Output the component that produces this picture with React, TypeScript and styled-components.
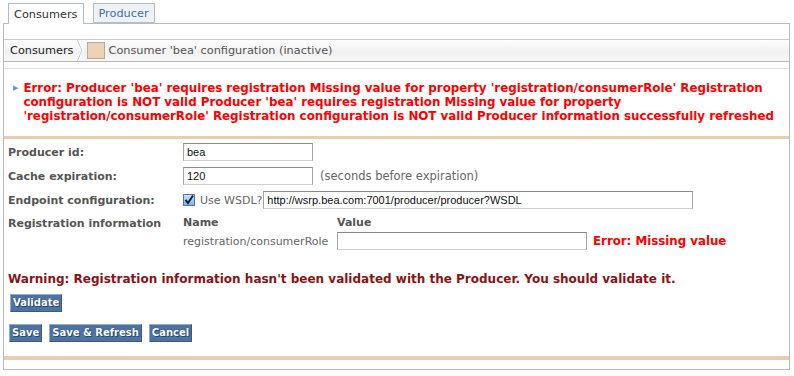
import styled, { createGlobalStyle } from 'styled-components';

const GlobalStyle = createGlobalStyle`
  body {
    margin: 0;
    background: #ffffff;
    font-family: "DejaVu Sans", Verdana, sans-serif;
    color: #333333;
  }
`;

const Page = styled.div`
  padding: 3px 4px 0 3px;
  width: 787px;
`;

const TabBar = styled.div`
  display: flex;
  gap: 9px;
  padding-left: 5px;
  height: 20px;
  position: relative;
  z-index: 1;
`;

const Tab = styled.div<{ $active?: boolean }>`
  display: flex;
  align-items: center;
  padding: 0 5px;
  height: ${(p) => (p.$active ? '20px' : '18px')};
  font-size: 11.3px;
  color: ${(p) => (p.$active ? '#333333' : '#3b6fb6')};
  background: ${(p) => (p.$active ? '#ffffff' : '#eef2f5')};
  border: 1px solid #b5bdc4;
  border-bottom: ${(p) => (p.$active ? 'none' : '1px solid #b5bdc4')};
`;

const Panel = styled.div`
  border: 1px solid #b5bdc4;
  height: 345px;
  display: flex;
  flex-direction: column;
`;

const Breadcrumb = styled.div`
  margin-top: 15px;
  height: 21px;
  display: flex;
  align-items: center;
  border-top: 1px solid #c9c9c9;
  border-bottom: 1px solid #b8b8b8;
  background: linear-gradient(#ffffff 0%, #f1f1f1 55%, #f7f7f7 100%);
  font-size: 11.3px;
  color: #444444;
`;

const Crumb = styled.span<{ $root?: boolean }>`
  padding-left: ${(p) => (p.$root ? '6px' : '4px')};
  color: ${(p) => (p.$root ? '#222222' : '#555555')};
  white-space: nowrap;
`;

const Swatch = styled.span`
  width: 16px;
  height: 15px;
  margin-left: 3px;
  background: #ecd2b8;
  border: 1px solid #bfa892;
`;

const MessageBox = styled.div`
  margin-top: 6px;
  border-top: 1px solid #e2e2e2;
  padding: 12px 3px 13px 9px;
  display: flex;
  gap: 5px;
`;

const ErrorText = styled.div`
  font-size: 11.85px;
  line-height: 14px;
  font-weight: bold;
  color: #ff0000;
`;

const Bullet = styled.span`
  color: #6f93c2;
  font-size: 7px;
  line-height: 14px;
`;

const Separator = styled.div`
  height: 3px;
  background: #e8cdb2;
`;

const Form = styled.div`
  padding: 4px 4px 0 4px;
  display: grid;
  grid-template-columns: 175px 1fr;
  row-gap: 6px;
  align-items: center;
`;

const Label = styled.div<{ $top?: boolean }>`
  font-size: 11px;
  font-weight: bold;
  color: #555555;
  align-self: ${(p) => (p.$top ? 'start' : 'center')};
  line-height: 15px;
  padding-top: ${(p) => (p.$top ? '1px' : '0')};
`;

const Field = styled.div`
  display: flex;
  align-items: center;
  gap: 6px;
  font-size: 11px;
  color: #666666;
`;

const TextBox = styled.div<{ $width: number }>`
  width: ${(p) => p.$width}px;
  height: 16px;
  box-sizing: content-box;
  border: 1px solid #a4a4a4;
  border-top-color: #8a8a8a;
  border-bottom-color: #cfcfcf;
  background: #ffffff;
  font-family: "Liberation Sans", Arial, sans-serif;
  font-size: 11px;
  line-height: 16px;
  padding-left: 3px;
  color: #111111;
  white-space: nowrap;
  overflow: hidden;
`;

const Hint = styled.span`
  margin-left: 1px;
  color: #666666;
  font-size: 11.5px;
`;

const WsdlLabel = styled.span`
  color: #666666;
  margin-left: -1px;
  margin-right: -5px;
`;

const RegTable = styled.div`
  display: grid;
  grid-template-columns: 154px auto auto;
  justify-content: start;
  align-items: center;
  row-gap: 2px;
  font-size: 11px;
  color: #666666;
`;

const ColHead = styled.div`
  font-weight: bold;
  color: #555555;
  line-height: 15px;
`;

const FieldError = styled.span`
  font-weight: bold;
  font-size: 11.8px;
  color: #ff0000;
  margin-left: 6px;
`;

const Warning = styled.div`
  margin: 22px 0 0 4px;
  font-size: 12px;
  font-weight: bold;
  color: #8b1313;
  line-height: 15px;
`;

const ButtonRow = styled.div<{ $top: number; $left: number }>`
  display: flex;
  gap: 7px;
  margin-top: ${(p) => p.$top}px;
  padding-left: ${(p) => p.$left}px;
`;

const Button = styled.button`
  font-family: "DejaVu Sans", Verdana, sans-serif;
  font-size: 10px;
  font-weight: bold;
  color: #ffffff;
  text-shadow: 0 0 1px #1c3458, 1px 1px 0 #2b4a74;
  background: #4d73a5;
  border: 1px solid #97abc6;
  border-bottom-color: #3a5a86;
  border-right-color: #3a5a86;
  height: 18px;
  padding: 0 2px;
  line-height: 14px;
  cursor: pointer;
`;

const Footer = styled.div`
  margin-top: auto;
  margin-bottom: 9px;
  height: 4px;
  background: #e8cdb2;
`;

const Chevron = () => (
  <svg width="7" height="21" viewBox="0 0 7 21" style={{ marginLeft: 3 }}>
    <polyline points="0.5,0 5,10.5 0.5,21" fill="none" stroke="#c8c8c8" strokeWidth="1" />
    <polyline points="1.5,0 6,10.5 1.5,21" fill="none" stroke="#ffffff" strokeWidth="1" />
  </svg>
);

const CheckBox = () => (
  <svg width="12" height="12" viewBox="0 0 12 12">
    <defs>
      <linearGradient id="cb" x1="0" y1="0" x2="0" y2="1">
        <stop offset="0" stopColor="#d6e6f8" />
        <stop offset="1" stopColor="#7fb0e6" />
      </linearGradient>
    </defs>
    <rect x="0.5" y="0.5" width="11" height="11" fill="url(#cb)" stroke="#5478a8" />
    <path d="M2.5 6 L5 9 L10 1.5" fill="none" stroke="#13264a" strokeWidth="2" />
  </svg>
);

const App = () => {
  return (
    <Page>
      <GlobalStyle />
      <TabBar>
        <Tab $active>Consumers</Tab>
        <Tab>Producer</Tab>
      </TabBar>
      <Panel>
        <Breadcrumb>
          <Crumb $root>Consumers</Crumb>
          <Chevron />
          <Swatch />
          <Crumb>Consumer 'bea' configuration (inactive)</Crumb>
        </Breadcrumb>
        <MessageBox>
          <Bullet>▶</Bullet>
          <ErrorText>
            Error: Producer 'bea' requires registration Missing value for property 'registration/consumerRole' Registration
            configuration is NOT valid Producer 'bea' requires registration Missing value for property
            'registration/consumerRole' Registration configuration is NOT valid Producer information successfully refreshed
          </ErrorText>
        </MessageBox>
        <Separator />
        <Form>
          <Label>Producer id:</Label>
          <Field>
            <TextBox $width={125}>bea</TextBox>
          </Field>
          <Label>Cache expiration:</Label>
          <Field>
            <TextBox $width={125}>120</TextBox>
            <Hint>(seconds before expiration)</Hint>
          </Field>
          <Label>Endpoint configuration:</Label>
          <Field>
            <CheckBox />
            <WsdlLabel>Use WSDL?</WsdlLabel>
            <TextBox $width={425}>http://wsrp.bea.com:7001/producer/producer?WSDL</TextBox>
          </Field>
          <Label $top>Registration information</Label>
          <RegTable>
            <ColHead>Name</ColHead>
            <ColHead>Value</ColHead>
            <span />
            <span>registration/consumerRole</span>
            <TextBox $width={245} />
            <FieldError>Error: Missing value</FieldError>
          </RegTable>
        </Form>
        <Warning>
          Warning: Registration information hasn't been validated with the Producer. You should validate it.
        </Warning>
        <ButtonRow $top={7} $left={6}>
          <Button>Validate</Button>
        </ButtonRow>
        <ButtonRow $top={12} $left={5}>
          <Button>Save</Button>
          <Button>Save &amp; Refresh</Button>
          <Button>Cancel</Button>
        </ButtonRow>
        <Footer />
      </Panel>
    </Page>
  );
};

export default App;
